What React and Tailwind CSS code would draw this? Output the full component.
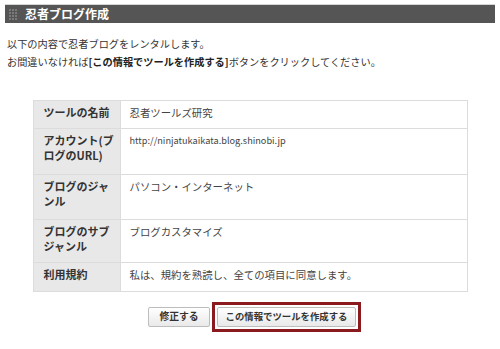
import React from 'react'

const rows = [
  { label: ['ツールの名前'], value: '忍者ツールズ研究', h: 'h-[28px]' },
  { label: ['アカウント(ブ', 'ログのURL)'], value: 'http://ninjatukaikata.blog.shinobi.jp', h: 'h-[46px]', url: true },
  { label: ['ブログのジャ', 'ンル'], value: 'パソコン・インターネット', h: 'h-[45px]' },
  { label: ['ブログのサブ', 'ジャンル'], value: 'ブログカスタマイズ', h: 'h-[43px]' },
  { label: ['利用規約'], value: '私は、規約を熟読し、全ての項目に同意します。', h: 'h-[29px]' },
]

function Dots() {
  return (
    <div className="grid grid-cols-3 gap-[1px]">
      {Array.from({ length: 12 }).map((_, i) => (
        <span key={i} className="block w-[2px] h-[2px] bg-[#7a7a7a]" />
      ))}
    </div>
  )
}

export default function App() {
  return (
    <div
      className="w-[500px] h-[349px] bg-white px-[5px] pt-[4px] text-[#333]"
      style={{ fontFamily: '"Noto Sans CJK JP", "Noto Sans", sans-serif' }}
    >
      {/* title bar */}
      <div className="flex items-center h-[19px] bg-[#555555] border-t border-[#d6d6d6] pl-[4px]">
        <Dots />
        <h1 className="ml-[8px] text-[12px] font-bold text-white leading-none">忍者ブログ作成</h1>
      </div>

      {/* intro */}
      <div className="mt-[12px] pl-[2px] text-[10.2px] leading-[18px] text-[#333]">
        <p>以下の内容で忍者ブログをレンタルします。</p>
        <p>
          お間違いなければ<b className="font-bold text-[#222]">[この情報でツールを作成する]</b>ボタンをクリックしてください。
        </p>
      </div>

      {/* confirm table */}
      <table className="mt-[29px] mx-auto w-[435px] border-collapse border border-[#dcdcdc]">
        <tbody>
          {rows.map((r, i) => (
            <tr key={i} className={r.h}>
              <th className="w-[87px] align-top text-left bg-[#e8e8e8] border border-[#dcdcdc] pl-[10px] pt-[4px] text-[11px] leading-[15px] font-bold text-[#333]">
                {r.label.map((l, j) => (
                  <div key={j}>{l}</div>
                ))}
              </th>
              <td
                className={
                  r.url
                    ? 'align-top border border-[#dcdcdc] pl-[9px] pt-[4px] text-[9.2px] leading-[15px] text-[#444]'
                    : 'align-top border border-[#dcdcdc] pl-[9px] pt-[4px] text-[10.4px] leading-[15px] text-[#444]'
                }
              >
                {r.value}
              </td>
            </tr>
          ))}
        </tbody>
      </table>

      {/* buttons */}
      <div className="mt-[10px] flex items-center justify-center gap-[2px] ml-[9px]">
        <button className="flex items-center justify-center h-[20px] w-[62px] rounded-[2px] border border-[#bdbdbd] bg-gradient-to-b from-white to-[#e9e9e9] text-[9.8px] font-bold text-[#333] leading-none">
          修正する
        </button>
        <div className="flex border-[3px] border-[#8b1a1f] p-[2px]">
          <button className="flex items-center justify-center h-[20px] w-[139px] rounded-[2px] border border-[#bdbdbd] bg-gradient-to-b from-white to-[#e9e9e9] text-[9.4px] font-bold text-[#333] leading-none whitespace-nowrap">
            この情報でツールを作成する
          </button>
        </div>
      </div>
    </div>
  )
}
